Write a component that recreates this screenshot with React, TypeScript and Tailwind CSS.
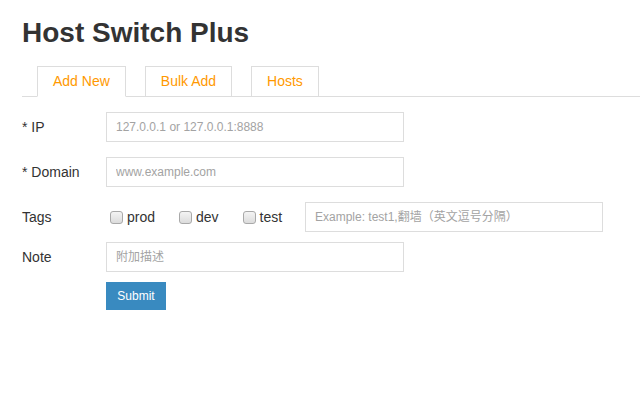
import { useState } from 'react';

const FONT = "font-['Liberation_Sans',Arial,'Noto_Sans_CJK_SC',sans-serif]";

const TABS = ['Add New', 'Bulk Add', 'Hosts'];
const TAGS = ['prod', 'dev', 'test'];

export default function App() {
  const [tab, setTab] = useState('Add New');
  const [tags, setTags] = useState<string[]>([]);

  const toggle = (t: string) =>
    setTags((cur) => (cur.includes(t) ? cur.filter((x) => x !== t) : [...cur, t]));

  return (
    <div className={`min-h-[400px] w-[640px] bg-white pl-[22px] text-[#333] ${FONT}`}>
      <h1 className="pt-[17px] text-[28px] font-bold leading-[31px] text-[#333]">Host Switch Plus</h1>

      <div className="mt-[18px] flex gap-[19px] border-b border-[#ddd] pl-[15px]">
        {TABS.map((t) => (
          <button
            key={t}
            onClick={() => setTab(t)}
            className={`-mb-px h-[31px] border border-[#ddd] px-[15px] text-[14px] leading-[29px] text-[#f90] ${
              tab === t ? 'border-b-white bg-white' : ''
            }`}
          >
            {t}
          </button>
        ))}
      </div>

      <form onSubmit={(e) => e.preventDefault()} className="pt-[15px]">
        <Row label="* IP">
          <Field placeholder="127.0.0.1 or 127.0.0.1:8888" />
        </Row>
        <Row label="* Domain" className="mt-[15px]">
          <Field placeholder="www.example.com" />
        </Row>
        <Row label="Tags" className="mt-[15px]">
          <div className="flex w-[199px] flex-none items-center">
            {TAGS.map((t) => (
              <label key={t} className="mr-[20px] flex cursor-pointer items-center text-[14px]">
                <span
                  onClick={() => toggle(t)}
                  className={`mx-[4px] h-[13px] w-[13px] rounded-[3px] border border-[#a9a9a9] bg-gradient-to-b from-[#f4f4f4] to-[#dcdcdc] ${
                    tags.includes(t) ? 'ring-1 ring-[#398ac0]' : ''
                  }`}
                />
                {t}
              </label>
            ))}
          </div>
          <Field placeholder="Example: test1,翻墙（英文逗号分隔）" />
        </Row>
        <Row label="Note" className="mt-[10px]">
          <Field placeholder="附加描述" />
        </Row>
        <div className="mt-[10px] pl-[84px]">
          <button
            type="submit"
            className="h-[28px] w-[60px] bg-[#398ac0] text-[12px] text-white"
          >
            Submit
          </button>
        </div>
      </form>
    </div>
  );
}

function Row({ label, className = '', children }: { label: string; className?: string; children: React.ReactNode }) {
  return (
    <div className={`flex items-center ${className}`}>
      <span className="w-[84px] flex-none pt-px text-[14px]">{label}</span>
      {children}
    </div>
  );
}

function Field({ placeholder }: { placeholder: string }) {
  return (
    <input
      placeholder={placeholder}
      className="h-[30px] w-[298px] border border-[#ddd] px-[9px] text-[12px] text-[#333] outline-none placeholder:text-[#a3a3a3] focus:border-[#398ac0]"
    />
  );
}
